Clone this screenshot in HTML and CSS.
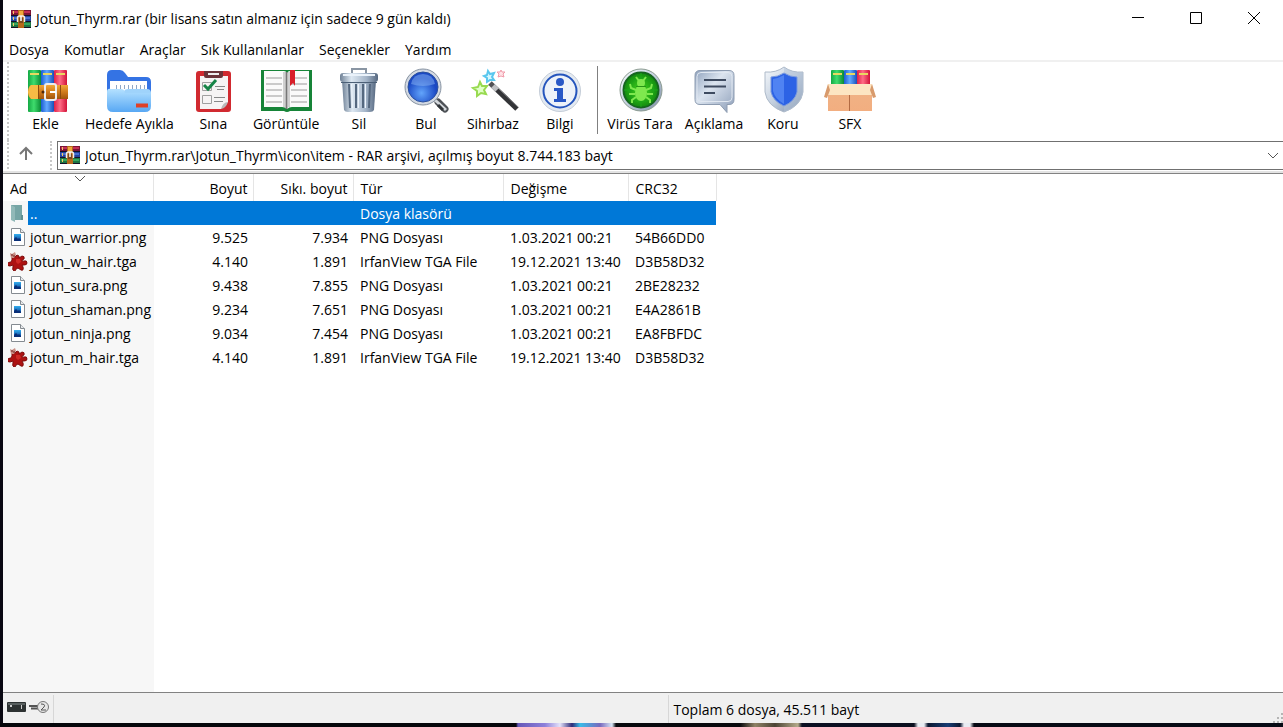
FILE: index.html
```html
<!doctype html>
<html lang="tr">

<head>
	<meta charset="utf-8">
	<title>Jotun_Thyrm.rar</title>
	<link rel="stylesheet" href="styles.css">
</head>

<body>
	<svg class="defs" width="0" height="0" aria-hidden="true">
		<defs>
			<linearGradient id="gGreen"><stop offset="0" stop-color="#14a844"/><stop offset=".45" stop-color="#3fdc6d"/><stop offset="1" stop-color="#0a8a34"/></linearGradient>
			<linearGradient id="gBlue"><stop offset="0" stop-color="#1c5cd0"/><stop offset=".45" stop-color="#63aaff"/><stop offset="1" stop-color="#1a50b8"/></linearGradient>
			<linearGradient id="gRed"><stop offset="0" stop-color="#e02048"/><stop offset=".45" stop-color="#ff6d86"/><stop offset="1" stop-color="#d01238"/></linearGradient>
			<linearGradient id="gBelt" x2="0" y2="1"><stop offset="0" stop-color="#f0a838"/><stop offset=".5" stop-color="#d07a1c"/><stop offset="1" stop-color="#a0540c"/></linearGradient>
			<linearGradient id="gFold" x2="0" y2="1"><stop offset="0" stop-color="#b5e2ff"/><stop offset="1" stop-color="#58a8f4"/></linearGradient>
			<linearGradient id="gSteel"><stop offset="0" stop-color="#6f8196"/><stop offset=".3" stop-color="#dde8f2"/><stop offset=".7" stop-color="#a3b4c8"/><stop offset="1" stop-color="#566880"/></linearGradient>
			<linearGradient id="gSilver" x2="1" y2="1"><stop offset="0" stop-color="#f6f9fc"/><stop offset=".5" stop-color="#c3cfde"/><stop offset="1" stop-color="#7889a3"/></linearGradient>
			<linearGradient id="gBubble" x2="1" y2="1"><stop offset="0" stop-color="#8fa2bd"/><stop offset=".4" stop-color="#dbe4ef"/><stop offset="1" stop-color="#8c9db8"/></linearGradient>
			<radialGradient id="gLens" cx=".45" cy=".7"><stop offset="0" stop-color="#62a4fb"/><stop offset="1" stop-color="#1a48c4"/></radialGradient>
			<radialGradient id="gRadar"><stop offset="0" stop-color="#42d71e"/><stop offset="1" stop-color="#118a10"/></radialGradient>
			<linearGradient id="gPic" x2="0" y2="1"><stop offset="0" stop-color="#35b0f0"/><stop offset="1" stop-color="#0b3f94"/></linearGradient>
			<linearGradient id="gBox" x2="0" y2="1"><stop offset="0" stop-color="#f0b285"/><stop offset="1" stop-color="#f2ae80"/></linearGradient>
		</defs>
		<symbol id="rar" viewBox="0 0 20 18">
			<path fill="#7b1535" d="M0 0h20v6H0z"/><path fill="#23439e" d="M0 6h20v6H0z"/><path fill="#1d7443" d="M0 12h20v6H0z"/>
			<path fill="#c32e56" d="M1 1h18v2H1z"/><path fill="#4870d0" d="M1 7h18v2H1z"/><path fill="#36a75c" d="M1 13h18v2H1z"/>
			<path stroke="#151025" d="M0 5.5h20M0 11.5h20M0 17.5h20"/>
			<path fill="#f4cb62" d="M2 1h1v3H2zM2 7h1v3H2zM2 13h1v3H2z"/>
			<path fill="#b6681a" d="M7 0h6v18H7z"/><path fill="#f0a93c" d="M8 1h4v5H8z"/>
			<path fill="none" stroke="#f2eee8" stroke-width="1.5" d="M6.500 12V8q0-2 2-2h3q2 0 2 2v4"/>
			<path fill="#7c481d" d="M8 8h4v5H8z"/><path stroke="#fff" stroke-width="1.5" d="M10 6v5"/>
		</symbol>
		<symbol id="png" viewBox="0 0 18 18">
			<path fill="#fff" stroke="#858b91" d="M2.5.5h9l4 4v13h-13z"/>
			<path fill="#e7e9eb" stroke="#858b91" d="M11.5.5v4h4"/>
			<path fill="url(#gPic)" d="M5 6h7v7H5z"/><path fill="#092f78" d="M5 11l2-2 2 2 1-1 2 2v1H5z"/>
		</symbol>
		<symbol id="tga" viewBox="0 0 20 20">
			<path fill="#ad1212" stroke="#7e0c0c" d="M4 6l3 0 2-2 2 1 0 2 3-2q3 0 2 3l-2 1q0 2 2 1 3-1 3 2 0 2-3 2l-2 0 1 2q1 4-2 3l-3-2-2 1q0 2-2 2-2-1-1-4l0-2-3 1q-3 0-3-2 1-2 4-2l1-2z"/>
			<path fill="#cf2a26" d="M8 8h4l1 3-3 2-2-2z"/>
			<path fill="#c98f85" d="M2 2l2 1 3-2 1 3-2 3-3 0z"/><path stroke="#742222" d="M3 4h2M5 5h2"/>
		</symbol>
	</svg>

	<div class="window">
		<header class="titlebar">
			<svg class="app-icon" width="20" height="18"><use href="#rar"/></svg>
			<h1>Jotun_Thyrm.rar (bir lisans satın almanız için sadece 9 gün kaldı)</h1>
			<div class="caption">
				<button aria-label="Küçült"><svg width="12" height="12"><path d="M0 5.5h12"/></svg></button>
				<button aria-label="Büyüt"><svg width="12" height="12"><path d="M.5.5h11v11H.5z"/></svg></button>
				<button aria-label="Kapat"><svg width="12" height="12"><path d="M0 0l12 12M12 0L0 12"/></svg></button>
			</div>
		</header>

		<nav class="menubar">
			<button>Dosya</button>
			<button>Komutlar</button>
			<button>Araçlar</button>
			<button>Sık Kullanılanlar</button>
			<button>Seçenekler</button>
			<button>Yardım</button>
		</nav>

		<div class="toolbar">
			<button>
				<svg viewBox="0 0 52 48">
					<rect x="8" y="4" width="13" height="42" rx="1" fill="url(#gGreen)"/>
					<rect x="21" y="4" width="13" height="42" rx="1" fill="url(#gBlue)"/>
					<rect x="34" y="4" width="13" height="42" rx="1" fill="url(#gRed)"/>
					<path stroke="#e8d860" stroke-width="2" d="M10 8h9M23 8h9M36 8h9"/>
					<path fill="url(#gBelt)" d="M11 19h37v14H11q-3-2-3-7t3-7z"/>
					<path fill="#f6bb45" d="M11 19h7v14h-7q-3-3-3-7t3-7z"/>
					<path stroke="#8d4b0d" d="M18.5 19v14M40.5 19v14"/>
					<rect x="25" y="18" width="11" height="16" rx="2" fill="none" stroke="#ececec" stroke-width="2"/>
					<path stroke="#fff" stroke-width="2" d="M30 26h6"/><circle cx="23" cy="26" r="1.5" fill="#4e2607"/>
				</svg>
				Ekle
			</button>
			<button>
				<svg viewBox="0 0 52 48">
					<path fill="#3473e4" d="M4 9q0-5 5-5h8q3 0 5 3l3 4h18q5 0 5 5v18H4z"/>
					<path fill="#fff" d="M7 15h37v14H7z"/>
					<path stroke="#8fa7c6" stroke-dasharray="1 3" stroke-width="4" d="M13 21h29"/>
					<path fill="url(#gFold)" d="M4 26q0-4 4-3h10q3 0 4 3h26v14q0 6-6 6H10q-6 0-6-6z"/>
					<path fill="#9fd3fb" d="M21 25q1-2 4-2h19q4 0 4 4H22z"/>
					<path stroke="#e04028" stroke-width="4" d="M33 39.5h12"/>
				</svg>
				Hedefe Ayıkla
			</button>
			<button>
				<svg viewBox="0 0 52 48">
					<rect x="9" y="5" width="35" height="41" rx="3" fill="#d12a30"/>
					<path fill="#f6f4f4" d="M13 10h28v26l-7 7H13z"/><path fill="#b9b9b9" d="M41 36q-5 0-7 7 5-1 7-7z"/>
					<path fill="#6a3439" d="M17 5h19v5q0 2-2 2H19q-2 0-2-2z"/><path fill="#eee" d="M21 7h11v2H21z"/>
					<path fill="none" stroke="#a0a0a0" d="M15.5 16.5h9v8h-9zM15.5 29.5h9v8h-9z"/>
					<path fill="none" stroke="#168447" stroke-width="3" d="M17 19l4 4 8-9"/>
					<path stroke="#888" d="M28 20.5h10M30 23.5h7M27 31.5h11M27 35.5h9"/>
				</svg>
				Sına
			</button>
			<button>
				<svg viewBox="0 0 52 48">
					<path fill="#168438" d="M1 4h51v41H30q-3 2-6 0H1z"/>
					<path fill="#fafafa" d="M4 5h20q2 0 3 2v36q-2-2-5-2H4z"/><path fill="#fafafa" d="M49 5H30q-2 0-3 2v36q2-2 5-2h17z"/>
					<path stroke="#bbb" stroke-width="1.5" d="M6 12h16M6 18h16M6 24h16M6 30h16M6 36h16M31 12h16M31 18h16M31 24h16M31 30h16M31 36h16"/>
					<path stroke="#777" stroke-width="2" d="M26.5 6v37"/><path stroke="#d0d0d0" stroke-width="2" d="M24 6v35M29 6v35"/>
					<path fill="#d81f29" d="M30 4h5v16l-2-3-3 3z"/>
				</svg>
				Görüntüle
			</button>
			<button>
				<svg viewBox="0 0 52 48">
					<path fill="none" stroke="#8995a3" stroke-width="2" d="M19 8V3h14v5"/>
					<path fill="url(#gSteel)" d="M9 14h34l-2 30q-1 2-4 2H15q-3 0-4-2z"/>
					<path stroke="#55687f" stroke-width="2" d="M16 18l1 24M23 18v24M30 18v24M37 18l-1 24"/>
					<path stroke="#edf4fc" d="M18.5 18l1 24M25.5 18v24M32.5 18v24"/>
					<rect x="7" y="7" width="38" height="9" rx="3" fill="url(#gSteel)"/>
					<path stroke="#eaf2fa" stroke-width="2" d="M10 9h32"/><path stroke="#4c6077" d="M8 16.5h36"/>
				</svg>
				Sil
			</button>
			<button>
				<svg viewBox="0 0 52 48">
					<path stroke="#4e5257" stroke-width="7" stroke-linecap="round" d="M38 36l7 7"/>
					<path stroke="#d4d8dc" stroke-width="3" d="M35 34l11 10"/><path stroke="#303438" stroke-width="3" d="M38 39l5 5"/>
					<circle cx="23" cy="21" r="18" fill="#d3d9e2" stroke="#8793a2"/>
					<circle cx="23" cy="21" r="15" fill="url(#gLens)" stroke="#2b509d"/>
					<path fill="#8ab5f5" opacity=".5" d="M11 18q2-10 12-10t12 10q-12 4-24 0z"/>
				</svg>
				Bul
			</button>
			<button>
				<svg viewBox="0 0 52 48">
					<path fill="#e0ffc7" stroke="#98da50" stroke-width="2" d="M13 16l2 4 5 0-3 4 2 4-5-1-4 3 0-5-4-3 5-1z"/>
					<path fill="#d5f7ff" stroke="#5ac7ee" stroke-width="2" d="M21 5l2 3 4-1-2 4 2 3-4 0-3 2 0-4-3-2 3-1z"/>
					<path fill="#ffe3e7" stroke="#f09aa9" d="M34 4l1 2 3 0-2 2 1 3-3-1-3 1 1-3-2-2 3 0z"/>
					<path stroke="#333437" stroke-width="5" d="M26 20l24 23"/><path stroke="#88898c" d="M29 20l22 21"/>
					<path stroke="#bfc0c3" stroke-width="5" d="M25 19l5 5"/><path stroke="#515155" stroke-width="5" d="M23 17l3 3"/>
				</svg>
				Sihirbaz
			</button>
			<button>
				<svg viewBox="0 0 52 48">
					<circle cx="26" cy="25" r="20.5" fill="#e4eaf1" stroke="#c4cdd8"/>
					<circle cx="26" cy="25" r="16.5" fill="#edf2f9" stroke="#2555bd" stroke-width="2"/>
					<circle cx="26" cy="16" r="4" fill="#2757c6"/><path fill="#2757c6" d="M20 22h9v11h3v3H20v-3h3v-8h-3z"/>
				</svg>
				Bilgi
			</button>
			<span class="separator"></span>
			<button>
				<svg viewBox="0 0 52 48">
					<circle cx="27" cy="24" r="21" fill="url(#gSilver)" stroke="#8b9b91"/>
					<circle cx="27" cy="24" r="17.5" fill="url(#gRadar)" stroke="#166520" stroke-width="2"/>
					<path fill="none" stroke="#1ba81a" d="M27 7v34M10 24h34M27 12a12 12 0 1 0 1 0"/>
					<ellipse cx="27" cy="27" rx="6" ry="8" fill="#7ee84e"/><circle cx="27" cy="17" r="4" fill="#7ee84e"/>
					<path fill="none" stroke="#7ee84e" stroke-width="2" d="M25 15l-3-4M29 15l3-4M22 24l-5-2-1-4M32 24l5-2 1-4M21 28h-6M33 28h6M22 31l-4 3v3M32 31l4 3v3"/>
					<path stroke="#269516" d="M22 20.5h10"/>
				</svg>
				Virüs Tara
			</button>
			<button>
				<svg viewBox="0 0 52 48">
					<path fill="url(#gBubble)" stroke="#8d9cb1" d="M12 4.5h29q5 0 5 5v24q0 5-5 5h-2v8l-7-8H12q-5 0-5-5v-24q0-5 5-5z"/>
					<path fill="none" stroke="#e1e8f1" d="M13 6.5h27q4 0 4 4v21q0 4-4 4H13q-4 0-4-4v-21q0-4 4-4z"/>
					<path stroke="#3e4b60" stroke-width="2" d="M16 14h22M16 20.5h22M16 27h11"/>
				</svg>
				Açıklama
			</button>
			<button>
				<svg viewBox="0 0 52 48">
					<path fill="url(#gSilver)" stroke="#aebac9" d="M27 1q8 6 19 5v20q-2 14-19 20Q10 40 8 26V6q11 1 19-5z"/>
					<path fill="#b4c4d8" opacity=".5" d="M27 1q8 6 19 5v20q-2 14-19 20z"/>
					<path fill="#2d63e5" stroke="#7b9bde" d="M27 7q6 4 13 4v15q-2 9-13 14-11-5-13-14V11q7 0 13-4z"/>
					<path fill="#6799fa" opacity=".6" d="M27 9q-5 3-11 4v12q2 8 11 13z"/>
				</svg>
				Koru
			</button>
			<button>
				<svg viewBox="0 0 52 48">
					<rect x="7" y="4" width="13" height="18" rx="1" fill="url(#gGreen)"/>
					<rect x="20" y="4" width="13" height="18" rx="1" fill="url(#gBlue)"/>
					<rect x="33" y="4" width="13" height="18" rx="1" fill="url(#gRed)"/>
					<path stroke="#e8d860" stroke-width="2" d="M9 8h9M22 8h9M35 8h9"/>
					<path fill="url(#gBox)" d="M4 24h44v21H4z"/><path fill="#b36b43" d="M25 28h1v17h-1z"/>
					<path fill="#fce5c2" d="M4 18h44l2 11H2z"/>
					<path fill="#d89a6c" d="M4 18L0 31l3 1 3-8zM48 18l4 13-3 1-3-8z"/>
				</svg>
				SFX
			</button>
		</div>

		<div class="addressbar">
			<button class="up" aria-label="Bir üst klasör">
				<svg width="16" height="16"><path d="M8 14V2M2 8l6-6 6 6"/></svg>
			</button>
			<div class="address">
				<svg class="address-icon" width="20" height="18"><use href="#rar"/></svg>
				<select aria-label="Adres">
					<option>Jotun_Thyrm.rar\Jotun_Thyrm\icon\item - RAR arşivi, açılmış boyut 8.744.183 bayt</option>
				</select>
				<svg class="address-arrow" width="10" height="6"><path d="M0 0l5 5 5-5"/></svg>
			</div>
		</div>

		<main class="list">
			<table>
				<colgroup>
					<col class="c-name"><col class="c-size"><col class="c-size"><col class="c-type"><col class="c-date"><col class="c-crc">
				</colgroup>
				<thead>
					<tr>
						<th>Ad<svg class="sort" width="10" height="6"><path d="M0 0l5 5 5-5"/></svg></th>
						<th class="num">Boyut</th>
						<th class="num">Sıkı. boyut</th>
						<th>Tür</th>
						<th>Değişme</th>
						<th>CRC32</th>
					</tr>
				</thead>
				<tbody>
					<tr class="selected">
						<td class="name"><div><svg width="18" height="18"><path fill="#76a5a5" d="M3 1h11v15H3z"/><path fill="#91b9b8" d="M3 1l4 2v15l-4-2z"/><path fill="#628f91" d="M13 11h2v5h-2z"/></svg><span>..</span></div></td>
						<td></td>
						<td></td>
						<td>Dosya klasörü</td>
						<td></td>
						<td></td>
					</tr>
					<tr>
						<td class="name"><div><svg width="18" height="18"><use href="#png"/></svg><span>jotun_warrior.png</span></div></td>
						<td class="num">9.525</td>
						<td class="num">7.934</td>
						<td>PNG Dosyası</td>
						<td>1.03.2021 00:21</td>
						<td>54B66DD0</td>
					</tr>
					<tr>
						<td class="name"><div><svg width="20" height="20"><use href="#tga"/></svg><span>jotun_w_hair.tga</span></div></td>
						<td class="num">4.140</td>
						<td class="num">1.891</td>
						<td>IrfanView TGA File</td>
						<td>19.12.2021 13:40</td>
						<td>D3B58D32</td>
					</tr>
					<tr>
						<td class="name"><div><svg width="18" height="18"><use href="#png"/></svg><span>jotun_sura.png</span></div></td>
						<td class="num">9.438</td>
						<td class="num">7.855</td>
						<td>PNG Dosyası</td>
						<td>1.03.2021 00:21</td>
						<td>2BE28232</td>
					</tr>
					<tr>
						<td class="name"><div><svg width="18" height="18"><use href="#png"/></svg><span>jotun_shaman.png</span></div></td>
						<td class="num">9.234</td>
						<td class="num">7.651</td>
						<td>PNG Dosyası</td>
						<td>1.03.2021 00:21</td>
						<td>E4A2861B</td>
					</tr>
					<tr>
						<td class="name"><div><svg width="18" height="18"><use href="#png"/></svg><span>jotun_ninja.png</span></div></td>
						<td class="num">9.034</td>
						<td class="num">7.454</td>
						<td>PNG Dosyası</td>
						<td>1.03.2021 00:21</td>
						<td>EA8FBFDC</td>
					</tr>
					<tr>
						<td class="name"><div><svg width="20" height="20"><use href="#tga"/></svg><span>jotun_m_hair.tga</span></div></td>
						<td class="num">4.140</td>
						<td class="num">1.891</td>
						<td>IrfanView TGA File</td>
						<td>19.12.2021 13:40</td>
						<td>D3B58D32</td>
					</tr>
				</tbody>
			</table>
		</main>

		<footer class="statusbar">
			<div class="status-icons">
				<svg width="19" height="10"><rect width="19" height="10" rx="1" fill="#2d3232"/><path fill="#596060" d="M1 1h17v2H1z"/><path fill="#ccc" d="M3 3h2v2H3zM14 3h1v4h-1z"/></svg>
				<svg width="21" height="14"><path stroke="#555" stroke-width="2" d="M0 6h10M2 8.5h8"/><circle cx="14" cy="7" r="5.5" fill="#e6e6e6" stroke="#777"/><path fill="none" stroke="#555" d="M12 4q5 0 3 3l-3 3h5"/></svg>
			</div>
			<div class="status-left"></div>
			<div class="status-total">Toplam 6 dosya, 45.511 bayt</div>
			<svg class="grip" width="10" height="10"><path fill="#b5b5b5" d="M8 0h2v2H8zM4 4h2v2H4zM8 4h2v2H8zM0 8h2v2H0zM4 8h2v2H4zM8 8h2v2H8z"/></svg>
		</footer>
	</div>
	<div class="desktop"></div>
</body>

</html>
```

FILE: styles.css
```css
* {
	box-sizing: border-box;
}

body {
	margin: 0;
	height: 100vh;
	display: flex;
	flex-direction: column;
	background: #090812;
	color: #000;
	font-family: "Open Sans", "Noto Sans", sans-serif;
	font-size: 14px;
	line-height: 20px;
	overflow: hidden;
}

button {
	border: 0;
	padding: 0;
	background: none;
	color: inherit;
	font: inherit;
}

svg {
	display: block;
	flex: none;
}

.defs {
	position: absolute;
}

.window {
	flex: 1;
	min-height: 0;
	margin-left: 3px;
	display: flex;
	flex-direction: column;
	background: #fff;
}

/* wallpaper showing below the window */
.desktop {
	height: 4px;
	background: linear-gradient(to right, #05060a 516px, #6557b8 518px, #8d80da 545px, #e4e2fa 560px, #2e2b78 572px, #38bce8 580px, #7869be 600px, #d8e6f4 612px, #08090d 616px, #08090d 740px, #8f8266 755px, #4b4334 775px, #b5ab8b 798px, #0a0f22 802px, #0a0f1e 914px, #e8ecf2 918px, #e8ecf2 924px, #0b1730 928px, #173c74 948px, #0b1730 960px, #e8ecf2 964px, #e8ecf2 970px, #070a14 974px);
}

.titlebar {
	display: flex;
	align-items: center;
	height: 37px;
	padding-left: 8px;
}

.titlebar h1 {
	flex: 1;
	margin: 0 0 0 5px;
	font-size: 14px;
	font-weight: normal;
}

.caption {
	display: flex;
	align-self: flex-start;
}

.caption button {
	display: flex;
	align-items: center;
	justify-content: center;
	width: 58px;
	height: 36px;
}

.caption svg {
	fill: none;
	stroke: #000;
}

.menubar {
	display: flex;
	gap: 15px;
	height: 25px;
	padding: 3px 6px 0;
	border-bottom: 2px solid #f0f0f0;
}

.toolbar {
	display: flex;
	height: 78px;
	margin-left: 4px;
	padding-left: 3px;
	border-left: 2px dotted #c8c8c8;
}

.toolbar button {
	display: flex;
	flex-direction: column;
	align-items: center;
	min-width: 67px;
	padding: 4px 6px 0;
	white-space: nowrap;
}

.toolbar svg {
	width: 52px;
	height: 48px;
}

.separator {
	width: 1px;
	height: 68px;
	margin: 4px 3px 0 4px;
	background: #808080;
}

.addressbar {
	display: flex;
	height: 33px;
	margin-left: 4px;
	border-left: 2px dotted #c8c8c8;
}

.up {
	width: 41px;
	padding: 0 0 6px 9px;
}

.up svg {
	fill: none;
	stroke: #777;
	stroke-width: 2;
}

.address {
	position: relative;
	flex: 1;
	height: 29px;
	margin-top: 1px;
	padding-left: 5px;
	border-left: 2px dotted #c8c8c8;
}

.address select {
	appearance: none;
	width: 100%;
	height: 29px;
	padding: 0 24px 0 27px;
	border: 1px solid #707070;
	border-right: 0;
	border-radius: 0;
	background: #fff;
	color: #000;
	font: inherit;
}

.address-icon {
	position: absolute;
	left: 8px;
	top: 5px;
}

.address-arrow {
	position: absolute;
	right: 5px;
	top: 12px;
}

.address-arrow path,
.sort path {
	fill: none;
	stroke: #555;
}

.list {
	flex: 1;
	min-height: 0;
	border-top: 1px solid #828282;
	border-bottom: 1px solid #828282;
	background: linear-gradient(to right, #f7f7f7 151px, #fff 151px);
	box-shadow: 0 -2px 0 #e3e3e3;
}

table {
	width: 713px;
	table-layout: fixed;
	border-collapse: collapse;
}

.c-name {
	width: 150px;
}

.c-size {
	width: 100px;
}

.c-type {
	width: 150px;
}

.c-date {
	width: 125px;
}

.c-crc {
	width: 88px;
}

th {
	position: relative;
	height: 27px;
	padding: 3px 5px 0 7px;
	border-right: 1px solid #e5e5e5;
	background: #fff;
	font-weight: normal;
	text-align: left;
}

td {
	height: 24px;
	padding: 2px 5px 0 7px;
	white-space: nowrap;
}

th.num,
td.num {
	text-align: right;
}

.sort {
	position: absolute;
	left: 72px;
	top: 2px;
}

td.name {
	padding: 0 0 0 5px;
}

.name div {
	display: flex;
	align-items: center;
}

.name svg {
	width: 20px;
}

.name span {
	flex: 1;
	padding: 2px 0 0 2px;
	line-height: 22px;
}

.selected td,
.selected span {
	background: #0078d7;
	color: #fff;
}

.selected td.name {
	background: none;
}

.statusbar {
	display: flex;
	height: 30px;
	padding-top: 2px;
	background: #f0f0f0;
}

.status-icons {
	display: flex;
	gap: 3px;
	align-items: center;
	width: 51px;
	padding: 0 0 4px 4px;
	border-right: 1px solid #d7d7d7;
}

.status-left {
	flex: 617;
	border-right: 1px solid #d7d7d7;
}

.status-total {
	flex: 602;
	padding: 5px 0 0 4px;
}

.grip {
	align-self: flex-end;
}
```
